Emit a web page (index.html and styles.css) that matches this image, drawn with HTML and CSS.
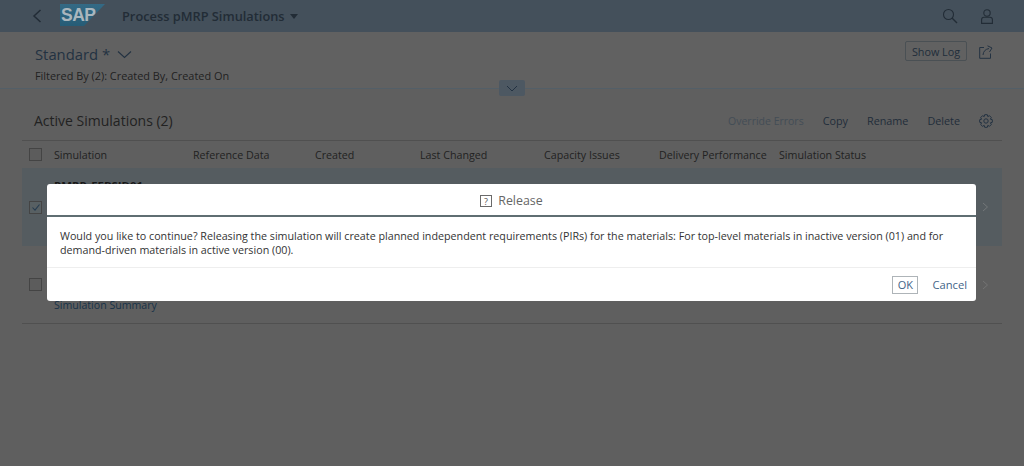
FILE: index.html
```html
<!DOCTYPE html>
<html lang="en">
<head>
<meta charset="utf-8">
<title>Process pMRP Simulations</title>
<link rel="stylesheet" href="styles.css">
</head>
<body>
<div class="page">
  <header class="shell">
    <svg class="icon back" width="12" height="16" viewBox="0 0 12 16"><path d="M9.5 2 L3 8 L9.5 14" fill="none" stroke="#222c36" stroke-width="1.5"/></svg>
    <svg class="logo" width="45" height="22" viewBox="0 0 45 22"><defs><linearGradient id="g" x1="0" y1="0" x2="0" y2="1"><stop offset="0" stop-color="#346a85"/><stop offset="1" stop-color="#265c76"/></linearGradient></defs><polygon points="0,0 45,0 24,22 0,22" fill="url(#g)"/><text x="1" y="17" class="logotext">SAP</text></svg>
    <span class="apptitle">Process pMRP Simulations</span>
    <span class="caret"></span>
    <span class="spacer"></span>
    <svg class="icon" width="16" height="16" viewBox="0 0 16 16"><circle cx="6.5" cy="6.5" r="5" fill="none" stroke="#222c36" stroke-width="1.1"/><path d="M10 10 L15 15" stroke="#222c36" stroke-width="1.4"/></svg>
    <svg class="icon user" width="12" height="15" viewBox="0 0 12 15"><circle cx="6" cy="4" r="3.2" fill="none" stroke="#222c36" stroke-width="1.1"/><path d="M.6 14.4 V10.6 Q.6 8.2 3 8.2 H9 Q11.4 8.2 11.4 10.6 V14.4 Z" fill="none" stroke="#222c36" stroke-width="1.1"/></svg>
  </header>

  <section class="head">
    <div class="head-top">
      <div class="variant"><span class="variant-name">Standard *</span>
        <svg width="15" height="9" viewBox="0 0 15 9"><path d="M1 1.5 L7.5 7.5 L14 1.5" fill="none" stroke="#233242" stroke-width="1.1"/></svg>
      </div>
      <button class="showlog">Show Log</button>
      <svg class="share" width="14" height="14" viewBox="0 0 14 14"><path d="M5 2.5 H0.7 V13.3 H11.5 V8.5" fill="none" stroke="#233242" stroke-width="1"/><path d="M4 10 Q4.5 4.5 10 3.5 M8.5 0.8 L13 3 L10.5 7" fill="none" stroke="#233242" stroke-width="1"/></svg>
    </div>
    <div class="filtered">Filtered By (2): Created By, Created On</div>
  </section>
  <div class="divider"><button class="collapse"><svg width="12" height="7" viewBox="0 0 12 7"><path d="M1 1 L6 6 L11 1" fill="none" stroke="#233242" stroke-width="1"/></svg></button></div>

  <main class="table">
    <div class="toolbar">
      <h2 class="tabletitle">Active Simulations (2)</h2>
      <span class="spacer"></span>
      <span class="act disabled">Override Errors</span>
      <span class="act">Copy</span>
      <span class="act">Rename</span>
      <span class="act">Delete</span>
      <svg class="gear" width="14" height="14" viewBox="0 0 14 14"><path d="M5.7 .7 H8.3 L8.8 2.6 L10.5 1.7 L12.3 3.5 L11.4 5.2 L13.3 5.7 V8.3 L11.4 8.8 L12.3 10.5 L10.5 12.3 L8.8 11.4 L8.3 13.3 H5.7 L5.2 11.4 L3.5 12.3 L1.7 10.5 L2.6 8.8 L.7 8.3 V5.7 L2.6 5.2 L1.7 3.5 L3.5 1.7 L5.2 2.6 Z" fill="none" stroke="#233242" stroke-width="1" stroke-linejoin="round"/><circle cx="7" cy="7" r="2.2" fill="none" stroke="#233242" stroke-width="1"/></svg>
    </div>
    <div class="row columns">
      <span class="check"></span>
      <span>Simulation</span><span>Reference Data</span><span>Created</span><span>Last Changed</span><span>Capacity Issues</span><span>Delivery Performance</span><span>Simulation Status</span>
    </div>
    <div class="row item selected">
      <span class="check checked"><svg width="10" height="9" viewBox="0 0 10 9"><path d="M1.5 4.5 L4 7.2 L8.5 1.5" fill="none" stroke="#263c50" stroke-width="1.1"/></svg></span>
      <div class="cell top"><b class="simname">PMRP_FEBSID01</b></div>
      <svg class="nav" width="7" height="10" viewBox="0 0 7 10"><path d="M1 1 L5.5 5 L1 9" fill="none" stroke="#74787a" stroke-width="1"/></svg>
    </div>
    <div class="row item">
      <span class="check"></span>
      <div class="cell"><a class="link">Simulation Summary</a></div>
      <svg class="nav" width="7" height="10" viewBox="0 0 7 10"><path d="M1 1 L5.5 5 L1 9" fill="none" stroke="#747474" stroke-width="1"/></svg>
    </div>
  </main>
</div>

<div class="dialog" role="dialog">
  <div class="dlg-head">
    <svg width="12" height="12" viewBox="0 0 12 12"><rect x=".5" y=".5" width="11" height="11" fill="none" stroke="#6a6a6a"/><text x="6" y="9.5" class="qmark">?</text></svg>
    <span>Release</span>
  </div>
  <div class="dlg-body">Would you like to continue? Releasing the simulation will create planned independent requirements (PIRs) for the materials: For top-level materials in inactive version (01) and for demand-driven materials in active version (00).</div>
  <div class="dlg-foot">
    <button class="ok">OK</button>
    <button class="cancel">Cancel</button>
  </div>
</div>
</body>
</html>
```
FILE: styles.css
```css
* { box-sizing: border-box; }
html, body { margin: 0; height: 100%; }
body {
  font-family: "Open Sans", "Noto Sans", "Liberation Sans", sans-serif;
  font-size: 10.8px;
  color: #222;
  background: #5f5f5f;
  overflow: hidden;
  position: relative;
}
.page { display: flex; flex-direction: column; height: 466px; }
.spacer { flex: 1; }
button { font-family: inherit; cursor: default; }

.shell {
  height: 32px;
  background: #44505b;
  display: flex;
  align-items: center;
  padding: 0 31px 0 31px;
  flex: none;
}
.logo { margin: -2px 0 0 17px; flex: none; }
.logotext { font: bold 17.5px "Liberation Sans", sans-serif; fill: #aab6bd; letter-spacing: -.5px; }
.apptitle { margin-left: 17px; font-size: 12.8px; font-weight: 600; color: #222c36; }
.caret { margin-left: 5px; border: 4px solid transparent; border-top: 5px solid #222c36; border-bottom: 0; }
.user { margin-left: 23px; }

.head { height: 56px; background: #616161; padding: 14px 31px 0 35px; flex: none; }
.head-top { display: flex; align-items: flex-start; height: 20px; }
.variant { flex: 1; display: flex; align-items: center; gap: 7px; }
.variant-name { font-size: 14.8px; color: #233242; line-height: 17px; }
.showlog {
  width: 62px; height: 20px; padding: 0;
  margin-top: -5px;
  background: transparent;
  border: 1px solid #4a5054;
  border-radius: 2px;
  color: #1f2d3a;
  font-size: 10.8px;
}
.share { margin: -1px 0 0 12px; }
.filtered { margin-top: 2px; line-height: 16px; font-size: 10.9px; color: #222; }

.divider { height: 1px; background: #535f68; position: relative; flex: none; }
.collapse {
  position: absolute; left: 499px; top: -8px;
  width: 26px; height: 16px; padding: 0;
  background: #4d5862; border: 0; border-radius: 2px;
  display: flex; align-items: center; justify-content: center;
}

.table { margin: 12px 22px 0 22px; flex: none; }
.toolbar {
  height: 40px;
  display: flex; align-items: center;
  padding: 0 9px 0 12px;
  border-bottom: 1px solid #505050;
  gap: 19px;
}
.tabletitle { margin: 0; font-size: 14px; font-weight: 400; color: #222; }
.act { color: #1f2d3a; font-size: 10.8px; }
.act.disabled { color: #434d56; font-size: 10.5px; }
.gear { margin-top: 1px; }
.row {
  display: grid;
  grid-template-columns: 32px 139px 122px 105px 124px 115px 120px 1fr;
  align-items: center;
  position: relative;
}
.columns { height: 27px; font-size: 10.7px; }
.check {
  width: 13px; height: 13px; margin-left: 7px;
  border: 1px solid #444; background: #5c5c5c;
  display: flex; align-items: center; justify-content: center;
}
.item { height: 78px; border-bottom: 1px solid #505050; background: #5f5f5f; }
.item.selected { background: #555c60; border-bottom: 0; }
.checked { background: #586063; }
.cell { grid-column: 2 / 3; display: flex; flex-direction: column; height: 100%; justify-content: flex-end; padding-bottom: 11px; white-space: nowrap; }
.cell.top { justify-content: flex-start; padding: 10px 0 0; }
.simname { font-weight: 700; font-size: 11.4px; color: #181818; }
.link { color: #183248; font-size: 10.6px; }
.nav { position: absolute; right: 13px; top: 50%; margin-top: -5px; }

.dialog {
  position: absolute;
  left: 47px; top: 184px;
  width: 929px; height: 117px;
  background: #fff;
  border-radius: 3px;
  display: flex; flex-direction: column;
}
.dlg-head {
  height: 33px; flex: none;
  padding-top: 2px;
  display: flex; align-items: center; justify-content: center; gap: 6px;
  border-bottom: 2px solid #5f6e72;
  font-size: 12.4px; color: #666;
}
.qmark { font: 9px "Open Sans", sans-serif; text-anchor: middle; fill: #555; }
.dlg-body {
  flex: 1;
  padding: 12px 13px 0;
  font-size: 10.72px; line-height: 14px; color: #333;
  border-bottom: 1px solid #eee;
}
.dlg-foot {
  height: 33px; flex: none;
  display: flex; align-items: center; justify-content: flex-end;
  padding-right: 9px; gap: 14px;
}
.ok { width: 26px; height: 18px; padding: 0; background: #fff; border: 1px solid #aeb4b8; color: #3f6488; font-size: 11px; }
.cancel { background: none; border: 0; padding: 0; color: #3f6488; font-size: 11.2px; }
```
